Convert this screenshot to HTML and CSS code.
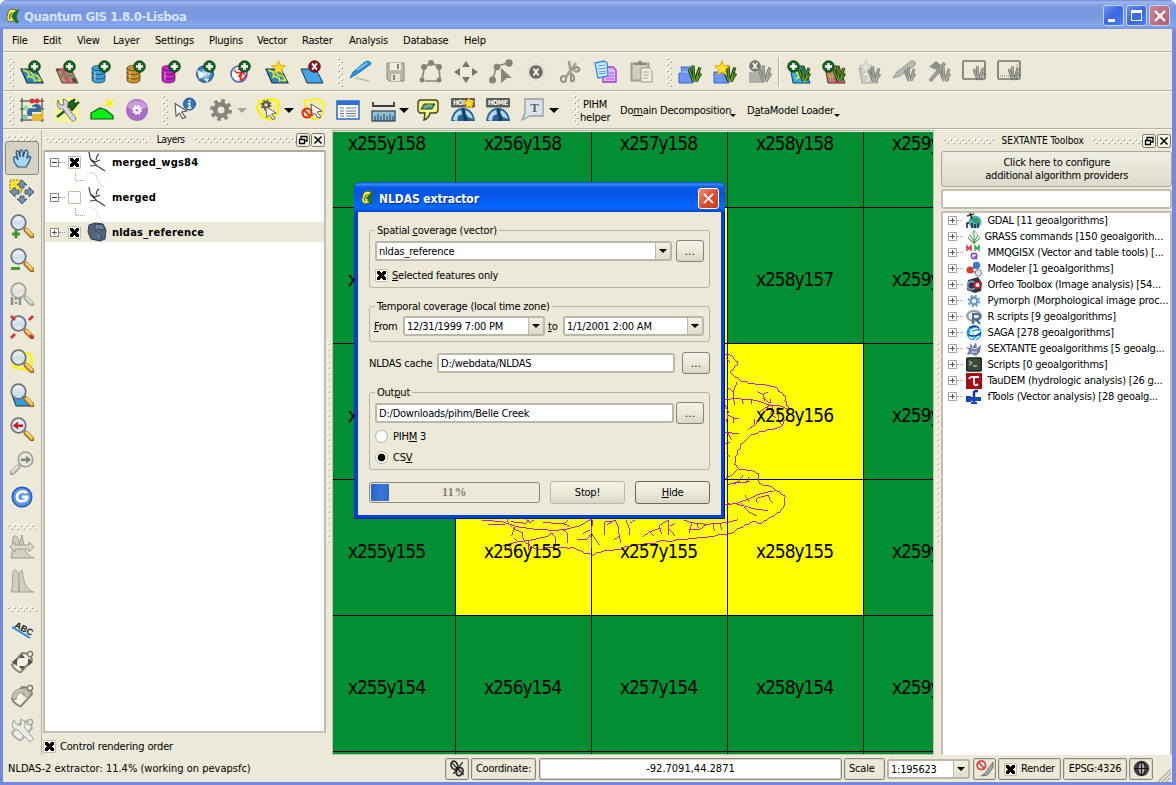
FILE: index.html
```html
<!DOCTYPE html>
<html lang="en">
<head>
<meta charset="utf-8">
<title>Quantum GIS 1.8.0-Lisboa</title>
<link rel="stylesheet" href="styles.css">
</head>
<body>
<svg class="defs" aria-hidden="true">
  <defs>
    <linearGradient id="gold" x1="0" y1="1" x2="1" y2="0"><stop offset="0" stop-color="#b86b10"/><stop offset=".5" stop-color="#ffc84a"/><stop offset="1" stop-color="#a8740e"/></linearGradient>
    <linearGradient id="lens" x1="0" y1="0" x2="0" y2="1"><stop offset="0" stop-color="#f4f8fd"/><stop offset=".55" stop-color="#c9dcf0"/><stop offset="1" stop-color="#e8f2fa"/></linearGradient>
    <radialGradient id="globe"><stop offset="0" stop-color="#dff0ff"/><stop offset=".5" stop-color="#5fa5dc"/><stop offset="1" stop-color="#1b4f8c"/></radialGradient>
  </defs>
  <symbol id="plus" viewBox="0 0 14 14"><circle cx="7" cy="7" r="6.2" fill="#17641f" stroke="#0e4414"/><path d="M7 3.2v7.6M3.2 7h7.6" stroke="#fff" stroke-width="2.6"/></symbol>
  <symbol id="cross" viewBox="0 0 14 14"><circle cx="7" cy="7" r="6.2" fill="#8a1420" stroke="#560a12"/><path d="M4.4 3.6l5.2 6.8M9.6 3.6l-5.2 6.8" stroke="#fff" stroke-width="1.9"/></symbol>
  <symbol id="star" viewBox="0 0 16 16"><path d="M8 .8l2 5 5.4.3-4.2 3.5 1.5 5.4L8 12l-4.700 3 1.500-5.400L.6 6.100 6 5.800z" fill="#ffe428" stroke="#f0a000"/></symbol>
  <symbol id="grass" viewBox="0 0 14 18"><path d="M6 17C3 12 2 8 1 4M7 17C5 10 5 6 5 1M8 17C9 11 10 7 12 3M8 17c2-4 3-6 5-8" fill="none" stroke="#183808" stroke-width="3.200"/><path d="M6 17C3 12 2 8 1 4M7 17C5 10 5 6 5 1M8 17C9 11 10 7 12 3M8 17c2-4 3-6 5-8" fill="none" stroke="#5f9c22" stroke-width="1.400"/></symbol>
  <symbol id="sheet" viewBox="0 0 24 24"><path d="M1 9h15l7 14H7z" fill="#2e86c0" stroke="#14394e" stroke-width="1.200"/></symbol>
  <symbol id="vector" viewBox="0 0 24 24"><use href="#sheet"/><path d="M3 10l5 2 1 4 5 2 1 4M10 11l3 4 5 1 3 5M9 16l-2 2M16 20l5 1" fill="none" stroke="#d8e838" stroke-width="1.700"/></symbol>
  <symbol id="raster" viewBox="0 0 24 24"><path d="M1 9h15l7 14H7z" fill="#b89068" stroke="#5c3a30"/><path d="M5 9h4l7 14h-4z" fill="#c8506e"/><path d="M3.500 14h15l1 3H5z" fill="#85806a"/><path d="M1 9h3l1 2H2zM12 9h4l2 4h-4zM16 18h4l2 4h-4z" fill="#565048"/></symbol>
  <symbol id="db" viewBox="0 0 24 24"><path d="M2 8v12c0 4 13 4 13 0V8z" fill="currentColor"/><ellipse cx="8.500" cy="8" rx="6.500" ry="2.700" fill="currentColor" stroke="#0006"/><path d="M2 12c0 3.500 13 3.500 13 0M2 16.500c0 3.500 13 3.500 13 0M2 8v12c0 4 13 4 13 0V8" fill="none" stroke="#0007"/><path d="M5 12v8" stroke="#fff6" stroke-width="1.500"/></symbol>
  <symbol id="cursor" viewBox="0 0 14 16"><path d="M1 1l11 7-5 1 4 5-3 1-3-5-3 3z" fill="#fff" stroke="#555"/></symbol>
  <symbol id="gear" viewBox="0 0 24 24"><circle cx="12" cy="12" r="9.200" fill="none" stroke="currentColor" stroke-width="3.500" stroke-dasharray="3.600 3.620"/><circle cx="12" cy="12" r="5.800" fill="none" stroke="currentColor" stroke-width="4.600"/></symbol>
  <symbol id="mag" viewBox="0 0 24 24"><path d="M14.500 14.500l2 2" stroke="#555" stroke-width="2.500"/><path d="M16 16l6 6" stroke="#875413" stroke-width="4.800" stroke-linecap="round"/><path d="M16.200 15.800l5.500 5.500" stroke="#f2b040" stroke-width="3.400" stroke-linecap="round"/><path d="M16.500 15l5 5" stroke="#ffe49a" stroke-width="1.200"/><circle cx="8.500" cy="8.500" r="7.300" fill="url(#lens)" fill-opacity=".9" stroke="#6d7278" stroke-width="1.700"/></symbol>
  <symbol id="home" viewBox="0 0 24 24"><path d="M0 23c1-9 6-13 12-13s11 4 12 13z" fill="#276396"/><path d="M2 22c1-6 4-9 8-10l1 4-4 2-1 5zM15 12c4 2 6 5 7 9l-5-2-3-4z" fill="#b8daf0"/><path d="M11 10h2l4 13h-4l-1-7z" fill="#123e68"/><rect x="0" y="0" width="24" height="9.500" rx="1" fill="#5b5f58"/><text x="2" y="7.300" textLength="20" class="plate">HOME</text></symbol>
  <symbol id="tag" viewBox="0 0 24 24"><path d="M12 3l8 1 2 6-11 12c-2 1-8-4-9-7z" fill="#f3f1e8" stroke="#888577" stroke-width="2"/><circle cx="20" cy="4" r="2.600" fill="#ece9d8" stroke="#777468" stroke-width="1.300"/></symbol>
  <symbol id="qgis" viewBox="0 0 16 16"><path d="M3 5c0-3 4-5 8-3 1 3 0 7-1 9-1 3-5 3-7 2-2-2-1-5 0-8z" fill="#f0ee62" stroke="#5b6410"/><path d="M7.500 4.500C5 6 4 9 5 11.500" stroke="#6f7616" stroke-width="1.300" fill="none"/><path d="M15 1c-5 1-7 4-9 8l2 .500-1 2 2 0 2 4 3-1-2.500-4.500c0-3 1.500-6 3.500-9z" fill="#1a7022"/></symbol>
  <symbol id="float" viewBox="0 0 14 14"><rect x=".5" y=".5" width="13" height="13" rx="2" fill="#f4f2e6" stroke="#77756a"/><path d="M5 6V3.500h6V8H8.500M3.500 6.500h5V10.500H3.500z" fill="none" stroke="#000" stroke-width="1.300"/></symbol>
  <symbol id="shut" viewBox="0 0 14 14"><rect x=".5" y=".5" width="13" height="13" rx="2" fill="#f4f2e6" stroke="#77756a"/><path d="M3.500 3.500l7 7M10.500 3.500l-7 7" stroke="#000" stroke-width="1.500"/></symbol>
  <symbol id="branch" viewBox="0 0 20 20"><path d="M2 0c1 6 1 8 4 10s2 4 6 5l6 4M12 2c-3 2-2 3-3 6M3 7l5 3 5-2M3 14l7-1" fill="none" stroke="#3a403b" stroke-width="1.200"/></symbol>
</svg>

<div class="window">
  <header class="titlebar">
    <svg class="logo"><use href="#qgis"/></svg>
    <span class="caption">Quantum GIS 1.8.0-Lisboa</span>
    <span class="wbtn blue"><i class="min"></i></span>
    <span class="wbtn blue"><i class="max"></i></span>
    <span class="wbtn red"><svg viewBox="0 0 12 12"><path d="M1 1l10 10M11 1L1 11" stroke="#fff" stroke-width="2.200"/></svg></span>
  </header>

  <nav class="menubar"><span>File</span><span>Edit</span><span>View</span><span>Layer</span><span>Settings</span><span>Plugins</span><span>Vector</span><span>Raster</span><span>Analysis</span><span>Database</span><span>Help</span></nav>

  <div class="toolbar">
    <i class="grip"></i>
    <svg class="ic" viewBox="0 0 24 24"><use href="#vector"/><use href="#plus" x="8" width="13" height="13"/></svg>
    <svg class="ic" viewBox="0 0 24 24"><use href="#raster"/><use href="#plus" x="8" width="13" height="13"/></svg>
    <svg class="ic c-blue" viewBox="0 0 24 24"><use href="#db"/><use href="#plus" x="8" width="13" height="13"/></svg>
    <svg class="ic c-ochre" viewBox="0 0 24 24"><use href="#db"/><use href="#plus" x="8" width="13" height="13"/></svg>
    <svg class="ic c-pink" viewBox="0 0 24 24"><use href="#db"/><use href="#plus" x="8" width="13" height="13"/></svg>
    <svg class="ic" viewBox="0 0 24 24"><circle cx="10" cy="14" r="9" fill="url(#globe)"/><path d="M2 10c3 0 4 3 7 3l-1 4-4 2zM12 6l5 4-3 5-3-3zM9 18l5 1-2 4z" fill="#fff" opacity=".85"/><use href="#plus" x="8" width="13" height="13"/></svg>
    <svg class="ic" viewBox="0 0 24 24"><circle cx="9" cy="14" r="8" fill="#fff" stroke="#4a68b8" stroke-width="1.600"/><path d="M4 10l3 3 5-1-3 4 3 4 4-4-4-4-2 9M12 8l-4 2" fill="none" stroke="#e02828" stroke-width="1.500"/><use href="#plus" x="8" width="13" height="13"/></svg>
    <svg class="ic" viewBox="0 0 24 24"><use href="#vector"/><use href="#star" x="6" width="15" height="15"/></svg>
    <svg class="ic" viewBox="0 0 24 24"><path d="M1 9h15l7 14H7z" fill="#45a4e6" stroke="#14394e"/><use href="#cross" x="8" width="13" height="13"/></svg>
    <i class="grip g2"></i>
    <svg class="ic" viewBox="0 0 24 24"><path d="M6 18l14 3" stroke="#bdb9a8" stroke-width="1.500"/><path d="M1 18l3-6L16 2c4-2 6 0 6 2L8 14z" fill="#2893e0" stroke="#1166a8" stroke-width=".8"/><path d="M8 10L18 3" stroke="#9bd2fa" stroke-width="1.500"/></svg>
    <svg class="ic" viewBox="0 0 24 24"><path d="M3 3h17v18H5l-2-2z" fill="#bab8ab" stroke="#8d8a7c"/><path d="M6 3h11v7H6z" fill="#f1efe4"/><path d="M7 14h9v7H7z" fill="#e6e3d5"/><path d="M9 15h2v5H9zM13 4h2v5h-2z" fill="#858275"/></svg>
    <svg class="ic" viewBox="0 0 24 24"><path d="M6 7l6-4 7 3M5 9L3 20M20 8l1 12M6 21h12" stroke="#8a887e" stroke-width="1.700" fill="none"/><g fill="#85837a"><circle cx="12" cy="3" r="3"/><circle cx="5" cy="7" r="3"/><circle cx="20" cy="7" r="3"/><circle cx="3" cy="20" r="2.500"/><circle cx="20" cy="20" r="2.500"/></g></svg>
    <svg class="ic" viewBox="0 0 24 24"><path d="M12 1l4 6H8zM12 23l4-6H8zM0 12l6-4v8zM24 12l-6-4v8z" fill="#77756c"/></svg>
    <svg class="ic" viewBox="0 0 24 24"><path d="M3 21L8 6l11-3" stroke="#85837a" fill="none" stroke-width="1.500"/><g fill="#85837a"><circle cx="20" cy="3" r="3.700"/><circle cx="8" cy="7" r="3.300"/><circle cx="3.500" cy="20" r="3.500"/><path d="M12 8l11 10-5 0-6 5z"/></g></svg>
    <svg class="ic" viewBox="0 0 24 24"><circle cx="12" cy="12" r="9.500" fill="#e5e2d3"/><circle cx="12" cy="12" r="6.800" fill="#6e6c64"/><path d="M9.500 8.500l5 7M14.500 8.500l-5 7" stroke="#fff" stroke-width="1.800"/></svg>
    <svg class="ic" viewBox="0 0 24 24"><path d="M10 1l2 12M17 3L7 17" stroke="#a5a296" stroke-width="2.800"/><ellipse cx="4.500" cy="19" rx="2.500" ry="3" fill="none" stroke="#96938a" stroke-width="2.200"/><path d="M12 13v8c4 1 4-4 1-7M13 10l5-3c5 2 1 6-3 4" fill="none" stroke="#96938a" stroke-width="2.200"/></svg>
    <svg class="ic" viewBox="0 0 24 24"><path d="M9 7h10l3 3v12H9z" fill="#e3b8fa" stroke="#9836d8" stroke-width="1.300"/><path d="M1 3l9-2 3 2 1 13-10 2z" fill="#d8ecff" stroke="#2a8aef" stroke-width="1.300"/><path d="M4 6l7-1M4 9l8-1M5 12l7-1M5 14l7-1" stroke="#4b98ee"/><path d="M15 13h5M15 16h5M12 19h8" stroke="#a85bd8"/></svg>
    <svg class="ic" viewBox="0 0 24 24"><path d="M2 3h18v18H2z" fill="#b5b2a2" stroke="#95927f"/><path d="M5 5h12V3h-3l-3-3-3 3H5z" fill="#8d8a7c"/><path d="M4 5h14v14H4z" fill="#d0cdbd"/><path d="M12 8h8l3 3v11H12z" fill="#f2f0e4" stroke="#9f9c8c"/><path d="M14 12h6M14 15h6M14 18h5" stroke="#a5a296"/></svg>
    <i class="grip g2"></i>
    <svg class="ic" viewBox="0 0 24 24"><path d="M3 7h12v16H1V13h3z" fill="#6d95f8" stroke="#4264c0"/><path d="M1 12h14" stroke="#aec4ff"/><use href="#grass" x="10" y="4" width="14" height="19"/></svg>
    <svg class="ic" viewBox="0 0 24 24"><path d="M1 12h15v11H1z" fill="#6d95f8" stroke="#4264c0"/><use href="#grass" x="10" y="4" width="14" height="19"/><use href="#star" x="1" width="16" height="16"/></svg>
    <svg class="ic gray" viewBox="0 0 24 24"><path d="M1 12h15v11H1z" fill="#8a8a8a"/><use href="#grass" x="10" y="4" width="14" height="19"/><use href="#cross" x="1" width="12" height="12"/></svg>
    <i class="sep"></i>
    <svg class="ic" viewBox="0 0 24 24"><path d="M3 6h14l6 17H6z" fill="#30b0e8" stroke="#104068"/><path d="M7 9l4 5 5 3 2 5M9 19l5-4" stroke="#e8e830" stroke-width="2" fill="none"/><use href="#grass" x="11" y="4" width="13" height="19"/><use href="#plus" width="13" height="13"/></svg>
    <svg class="ic" viewBox="0 0 24 24"><path d="M3 6h14l6 17H6z" fill="#c87880" stroke="#483020"/><path d="M5 14h12l2 4H6z" fill="#b8a050"/><path d="M12 18h5l2 5h-5z" fill="#c43468"/><use href="#grass" x="11" y="4" width="13" height="19"/><use href="#plus" width="13" height="13"/></svg>
    <svg class="ic gray" viewBox="0 0 24 24"><path d="M2 8h14l5 15H5z" fill="#bbb" stroke="#777"/><use href="#star" x="2" width="14" height="14"/><path d="M7 15c4-4 8 4 3 6" stroke="#eee" stroke-width="2" fill="none"/><use href="#grass" x="11" y="5" width="13" height="18"/></svg>
    <svg class="ic gray" viewBox="0 0 24 24"><path d="M1 18l4-6L19 1c4-1 5 2 4 4L8 16z" fill="#999" stroke="#666"/><use href="#grass" x="12" y="5" width="12" height="18"/></svg>
    <svg class="ic gray" viewBox="0 0 24 24"><path d="M3 21L18 3M7 4l14 17" stroke="#666" stroke-width="4"/><path d="M2 7l7-6 5 4-4 5z" fill="#555"/><use href="#grass" x="12" y="5" width="12" height="18"/></svg>
    <svg class="ic" viewBox="0 0 24 24"><rect x="1" y="1" width="22" height="18" rx="1" fill="none" stroke="#76746c" stroke-width="1.600"/><use class="gray" href="#grass" x="11" y="3" width="12" height="20"/></svg>
    <svg class="ic" viewBox="0 0 24 24"><rect x="1" y="1" width="22" height="18" rx="1" fill="none" stroke="#76746c" stroke-width="1.600"/><path d="M3 16h17V4" fill="none" stroke="#77756c" stroke-dasharray="1 1"/><use class="gray" href="#grass" x="11" y="3" width="12" height="20"/></svg>
  </div>

  <div class="toolbar second">
    <i class="grip"></i>
    <svg class="ic" viewBox="0 0 24 24"><path d="M2 0v24M22 0v24M0 3h24M0 11h24M0 22h24" stroke="#65645d" stroke-width="1.400"/><circle cx="12" cy="3" r="2.500" fill="#e03030"/><circle cx="17" cy="3" r="2.500" fill="#e03030"/><circle cx="6" cy="10" r="2.500" fill="#8be0a0"/><circle cx="5" cy="19" r="2.500" fill="#7bc8b0"/><path d="M12 9c0-4 9-4 9 0v5h-9v4H8c-2-3-1-7 2-7h6V9z" fill="#356c9f"/><path d="M21 11c4 3 3 12-1 12h-8v-7h9z" fill="#e8b830"/></svg>
    <svg class="ic" viewBox="0 0 24 24"><rect width="24" height="24" rx="3" fill="#faf49a"/><path d="M2 19l9-7M13 9l7-8M16 10l8-6" stroke="#176018" stroke-width="2.500"/><path d="M12 6l5-4 5 5-5 6z" fill="#1d641c" stroke="#0a2d0a"/><path d="M3 2l2 5h4L8 1c5 1 6 5 4 8l9 11c0 3-3 4-5 2L8 11C3 12 1 7 3 2z" fill="#d6dae0" stroke="#707780"/></svg>
    <svg class="ic" viewBox="0 0 24 24"><path d="M1 21v-6l9-5 6 2 7 6v3z" fill="#08f218" stroke="#075c0c" stroke-width="1.200"/><circle cx="19" cy="5" r="2.700" fill="#fff200"/><path d="M19 0v10M14 2l10 6M14 8l10-6" stroke="#fff200"/></svg>
    <svg class="ic" viewBox="0 0 24 24"><circle cx="12" cy="12" r="11" fill="#a870c4"/><path d="M2 9a11 11 0 0 1 20 0c-6 4-14 4-20 0z" fill="#c79edb"/><use class="white" href="#gear" x="6.500" y="6.500" width="11" height="11"/></svg>
    <i class="grip g3"></i>
    <svg class="ic" viewBox="0 0 24 24"><use href="#cursor" x="0" y="4" width="15" height="18"/><circle cx="15.500" cy="6" r="6" fill="#3478bd" stroke="#1c5595"/><path d="M15.500 2v2M14 5.500h1.500V10M13.500 10h4" stroke="#fff" stroke-width="1.700" fill="none"/></svg>
    <svg class="ic c-gray" viewBox="0 0 24 24"><use href="#gear"/></svg><i class="drop dim"></i>
    <svg class="ic" viewBox="0 0 24 24"><path d="M3 3l13-2 7 3-1 11-6 7-10-3-5-8z" fill="#f1ec9e" stroke="#f8f400" stroke-width="2"/><use class="c-dark" href="#gear" x="4" y="1" width="12" height="12"/><use href="#cursor" x="9" y="7" width="13" height="16"/></svg><i class="drop"></i>
    <svg class="ic" viewBox="0 0 24 24"><path d="M3 3l13-2 7 3-1 11-6 7-10-3-2-9z" fill="#f1ecae" stroke="#f8f400" stroke-width="1.500"/><use href="#cursor" x="9" y="4" width="14" height="18"/><circle cx="6" cy="15" r="4.500" fill="none" stroke="#dd3024" stroke-width="2.200"/><path d="M3 12l6 6" stroke="#dd3024" stroke-width="2"/></svg>
    <svg class="ic" viewBox="0 0 24 24"><rect x="1" y="3" width="22" height="18" fill="#fff" stroke="#2b66cd" stroke-width="1.500"/><rect x="1" y="3" width="22" height="4" fill="#2b6ddc"/><path d="M4 10h4M4 13h4M4 15.500h4M4 18h4M10 10h10M10 13h10M10 15.500h10M10 18h10" stroke="#667795" stroke-width="1.200"/></svg>
    <svg class="ic" viewBox="0 0 24 24"><path d="M2 4v4h21V4" fill="none" stroke="#3c3d3e" stroke-width="1.800"/><rect x="1" y="13" width="23" height="10" fill="#8bc1e0" stroke="#334c5c" stroke-width="1.300"/><path d="M4 23v-5M7 23v-7M10 23v-5M13 23v-7M16 23v-5M19 23v-7M22 23v-5" stroke="#263b48"/></svg><i class="drop"></i>
    <svg class="ic" viewBox="0 0 24 24"><path d="M5 2h14c2 0 3 1 3 3v6c0 2-1 4-3 4h-5c-1 4-3 6-6 7l1-7H5c-2 0-3-2-3-4V5c0-2 1-3 3-3z" fill="#f8f486" stroke="#42411c" stroke-width="1.400"/><path d="M8 6h11l-3 5H5z" fill="#4495ba" stroke="#24482c"/><path d="M8 10l5-3 3 1" stroke="#9cbb3c" stroke-width="1.700" fill="none"/></svg>
    <svg class="ic" viewBox="0 0 24 24"><use href="#home"/><use href="#star" x="12" y="-1" width="12" height="12"/></svg>
    <svg class="ic" viewBox="0 0 24 24"><use href="#home"/></svg>
    <svg class="ic" viewBox="0 0 24 24"><path d="M4 1h18v17H9l-8 4 3-7z" fill="#d9e3e9" stroke="#969da1" stroke-width="1.300"/><text x="13.500" y="14" text-anchor="middle" class="tee">T</text></svg><i class="drop"></i>
    <i class="grip g4"></i>
    <span class="txt two">PIHM<br>helper</span>
    <span class="txt domain">Do<u>m</u>ain Decomposition</span><i class="drop tiny"></i>
    <span class="txt loader">D<u>a</u>taModel Loader</span><i class="drop tiny"></i>
  </div>

  <div class="main">
    <aside class="sidebar">
      <i class="hgrip"></i>
      <span class="cell on"><svg viewBox="0 0 24 24"><path d="M8 21C5 18 3 14 4 11c2-1 3 1 4 3L6 6c1-2 3-1 3 1l1 4V5c1-2 3-1 3 1v5l2-6c1-2 3 0 3 2l-1 5 2-2c2 0 2 2 1 3-1 4-3 6-4 8z" fill="#a8d8f6" stroke="#2a506a" stroke-width="1.200"/></svg></span>
      <span class="cell"><svg viewBox="0 0 24 24"><path d="M0 0h12v12H0z" fill="#ffe232" stroke="#8b7b18" stroke-dasharray="2 1"/><path d="M12 0l5 5h-3v3h-4V5H7zM12 24l5-5h-3v-3h-4v3H7zM0 12l5-5v3h4v4H5v3zM24 12l-5-5v3h-4v4h4v3z" fill="#7493ac" stroke="#455d72"/></svg></span>
      <span class="cell"><svg viewBox="0 0 24 24"><use href="#mag"/><path d="M6 16v8M2 20h8" stroke="#3d9932" stroke-width="3"/></svg></span>
      <span class="cell"><svg viewBox="0 0 24 24"><use href="#mag"/><path d="M1 20.500h9" stroke="#3d9932" stroke-width="3"/></svg></span>
      <span class="cell gray"><svg viewBox="0 0 24 24"><use href="#mag"/><path d="M2 15v8M10 15v8M6 16v2M6 20v2" stroke="#555" stroke-width="2.500"/></svg></span>
      <span class="cell"><svg viewBox="0 0 24 24"><use href="#mag"/><path d="M1 1l4 4M23 1l-4 4M1 23l4-4M23 23l-3-3" stroke="#d82a34" stroke-width="2.500"/></svg></span>
      <span class="cell"><svg viewBox="0 0 24 24"><path d="M8 4l11 0 3 5-1 10-6 2-12-3z" fill="#f3ee9c" stroke="#fbf500" stroke-width="2"/><use href="#mag"/></svg></span>
      <span class="cell"><svg viewBox="0 0 24 24"><path d="M2 12h12l10 11H6z" fill="#339dd4" stroke="#12364a"/><use href="#mag"/></svg></span>
      <span class="cell"><svg viewBox="0 0 24 24"><use href="#mag"/><path d="M3 8.500l5-4v3h5v2.500H8v2.800z" fill="#d31825"/></svg></span>
      <span class="cell gray"><svg viewBox="0 0 24 24"><g transform="matrix(-1 0 0 1 24 0)"><use href="#mag"/></g><path d="M21 8.500l-5-4v3h-5v2.500h5v2.800z" fill="#444"/></svg></span>
      <span class="cell"><svg viewBox="0 0 24 24"><circle cx="12" cy="12" r="9.800" fill="#5b96eb" stroke="#2058bd" stroke-width="1.500"/><path d="M17 8c-4-3-10-1-10 4 0 6 9 5 10 1v-1h-5" fill="none" stroke="#fff" stroke-width="2.800"/></svg></span>
      <i class="hgrip mid"></i>
      <span class="cell faded"><svg viewBox="0 0 24 24"><path d="M1 23C4 15 1 5 4 1c5 0 5 4 5 11L12 0c2 14 5 22 12 23z" fill="#c9c7b9" stroke="#858378"/><path d="M0 12l5-5v3h14V7l5 5-5 5v-3H5v3z" fill="#d7d5c7" stroke="#858378"/></svg></span>
      <span class="cell faded"><svg viewBox="0 0 24 24"><path d="M1 23C4 15 1 5 4 1c5 0 5 4 5 22zM9 23C9 12 8 3 12 1c2 14 5 21 12 22z" fill="#c9c7b9" stroke="#8d8b80"/></svg></span>
      <i class="hgrip mid low"></i>
      <span class="cell"><svg viewBox="0 0 24 24"><text x="4" y="10" transform="rotate(27 4 10)" class="abc">ABC</text><path d="M2 10l18 11" stroke="#1789f5" stroke-width="2"/></svg></span>
      <span class="cell"><svg viewBox="0 0 24 24"><use href="#tag"/><path d="M12 4l3 4H9zM12 20l3-4H9zM2 12l5-4v8zM23 12l-5-4v8z" fill="#55534c"/></svg></span>
      <span class="cell"><svg viewBox="0 0 24 24"><use href="#tag"/><path d="M2 14C2 5 14 1 19 8l3 0-4 6-6-4h3c-3-3-9-1-9 6z" fill="#c4c1b2" stroke="#969384"/></svg></span>
      <span class="cell gray"><svg viewBox="0 0 24 24"><use href="#tag"/><path d="M4 2l3 5h4V1c5 2 5 6 3 8l9 11c0 4-4 4-6 1L8 12C2 12 1 7 4 2z" fill="#eee" stroke="#666"/></svg></span>
    </aside>

    <section class="dock layers">
      <div class="dockhead"><i class="hgrip wide"></i><span class="lt">Layers</span><i class="hgrip wide"></i><svg class="db"><use href="#float"/></svg><svg class="db"><use href="#shut"/></svg></div>
      <div class="tree">
        <div class="layer"><i class="exp"></i><i class="dots"></i><i class="check x"></i><svg class="lic"><use href="#branch"/></svg><span>merged_wgs84</span></div>
        <div class="sub"><svg viewBox="0 0 40 16"><path d="M.500 1v7.500h9" stroke="#9c9a90" stroke-dasharray="1 1" fill="none"/><path d="M14 1c8-1 7 4 9 8s5 4 5 7" fill="none" stroke="#f0b4f4"/></svg></div>
        <div class="layer"><i class="exp"></i><i class="dots"></i><i class="check"></i><svg class="lic"><use href="#branch"/></svg><span>merged</span></div>
        <div class="sub"><svg viewBox="0 0 40 16"><path d="M.500 1v7.500h9" stroke="#9c9a90" stroke-dasharray="1 1" fill="none"/><path d="M14 1c8-1 7 4 9 8s5 4 5 7" fill="none" stroke="#f2e0d6"/></svg></div>
        <div class="layer picked"><i class="exp more-in"></i><i class="dots"></i><i class="check x"></i><svg class="lic" viewBox="0 0 20 20"><path d="M2 3l6-2 8 1 3 6-1 9-5 2-9-2-3-7z" fill="#53647e" stroke="#2f3c50"/><path d="M8 2l8 1 2 5-7-1-3 2zM9 9l5 5-1 5" fill="#7084a0" stroke="#34435a"/></svg><span>nldas_reference</span></div>
      </div>
      <div class="order"><i class="check x"></i><span>Control rendering order</span></div>
    </section>

    <div class="splitter"><i class="vgrip"></i></div>

    <div class="map">
      <svg viewBox="333 132 600 622" class="canvas">
        <path d="M333 132h601v622H333z" fill="#028f33"/>
        <path d="M455 207h273v136h136v272H455z" fill="#ff0"/>
        <path d="M455.500 132v622M591.500 132v622M727.500 132v622M863.500 132v622M333 207.500h601M333 343.500h601M333 479.500h601M333 615.500h601M333 751.500h601" stroke="#000" fill="none"/>
        <g class="river" transform="translate(440 340) scale(.3333)">
          <path d="M855 42l13 2 12 6 3 8 10 8-1 8-8 4-4 12-8 4v5l14 12 9 4 8 8 14 1 12 8 12-2 10 4h24l6 3 18 2 12 4 5 12 8 2 8 10 5 3-2 12 6 4-2 9 8 6-3 12 1 12-6 12-8 8-4 12-9 5-12 3-5 3-20 2-9 4-14 1-5 5-18 4-12 9-10 14-10 5-2 14-9 5-1 14-6 8 3 10-6 10 5 2 10 12 16 2 12 3 13-1 9 8 9 2-2 14 4 14 14 8 14 1 12 4 7 10 14 3 5 8 12 5-3 14v16l-6 8-8 10-8 2-8 10-14 4-10 10-6 0-8 9-12-2-6-4-12 1-8 6-10 2-10 9-12 2-10 8-8 6-12 3-12 2-14-1-12 5-20 2-9 4-22-1-16 4-14-1-12 4-22-1-10 4-22 1-10-4-14 4-10 6-32 1-10 4-18-1-10 4-20 2-10 9-16-1-16 5-20-1-14 6-9 0-12 8-12-6-14 0-6-6-10-2-18-9-16 2-14-4-20 4-20-3-12-1-10 7-16 2-12-8-8-4-6-8-8 0-6-12-4-8 2-11-12-6-12-4-8-9-8-6-8-12 2-6-5-7-6-3"/>
          <path d="M860 140l20 15 3 40M892 125l-12 30M855 178l35-2 60 5 40 15 30 2 22 8M905 178l5 15M935 180l-2 13M950 153l20 12 5 17M965 165l18-8M970 175l20 15 2-12M960 215l30-20M925 268l22-15 15-25 30-35M945 252l0-15M1000 195l-8 28 15 10M1015 200l0 45 10 10M870 68l-12-15M855 195l10 20-5 30M862 225l22 10 14 0M882 235l-2 15M855 278l43 2M865 280l10 20M855 312l15-5M860 345l10 4M855 415l20-10 18-17M860 435l35-10 15-20M880 430l50-5M920 430l8-20M855 495l35-5 35-12 30-15 43-10M860 488l12 5M915 465l12 20M950 475l35-10 5 15 10 10M948 478l5 12M905 490l20 25 25 13M890 492l55 15 40 5"/>
          <path d="M125 540l60 5 45 15 55 8 55 3 35-2 45-12 35-20M145 555l50 0M212 545l45 5 10-10M225 562l-10 25M258 538l10 10 15-8M310 548l60 3 20 8M385 540l-15 12M370 570l12 10 0 30M330 575l15 15 3 25M340 578l-20 12-55 12-40 5-35 10M265 600l0 30M232 605l-10-12M205 615l12 15M410 600l30 0 15-20 2-40M430 580l20-10M455 580l12 20 12 15M455 590l0 35M495 585l0-40 25 0M500 555l25-15M525 540l10 20 3 30 5 20M537 590l-15 10M558 540l10 25 0 20M585 540l-15 10M610 590l20-15 30-10 0-10 25-15M632 577l8 10M660 565l5 18M685 540l0 45M685 565l20 22M705 550l-15 8M733 540l20 8 45 5 60-5 35-8M755 550l-8 28M770 548l5 15M800 553l-20 15-30 0M820 552l3 20M840 550l5 20"/>
        </g>
        <g class="labels">
          <text x="348" y="150" textLength="78">x255y158</text><text x="484" y="150" textLength="78">x256y158</text><text x="620" y="150" textLength="78">x257y158</text><text x="756" y="150" textLength="78">x258y158</text><text x="892" y="150" textLength="78">x259y158</text>
          <text x="348" y="286" textLength="78">x255y157</text><text x="756" y="286" textLength="78">x258y157</text><text x="892" y="286" textLength="78">x259y157</text>
          <text x="348" y="422" textLength="78">x255y156</text><text x="756" y="422" textLength="78">x258y156</text><text x="892" y="422" textLength="78">x259y156</text>
          <text x="348" y="558" textLength="78">x255y155</text><text x="484" y="558" textLength="78">x256y155</text><text x="620" y="558" textLength="78">x257y155</text><text x="756" y="558" textLength="78">x258y155</text><text x="892" y="558" textLength="78">x259y155</text>
          <text x="348" y="694" textLength="78">x255y154</text><text x="484" y="694" textLength="78">x256y154</text><text x="620" y="694" textLength="78">x257y154</text><text x="756" y="694" textLength="78">x258y154</text><text x="892" y="694" textLength="78">x259y154</text>
        </g>
      </svg>
    </div>

    <div class="splitter right"><i class="vgrip"></i></div>

    <section class="dock toolbox">
      <div class="dockhead"><i class="hgrip wide"></i><span class="st">SEXTANTE Toolbox</span><i class="hgrip wide"></i><svg class="db"><use href="#float"/></svg><svg class="db"><use href="#shut"/></svg></div>
      <div class="config">Click here to configure<br>additional algorithm providers</div>
      <div class="search"></div>
      <div class="algos">
        <div class="alg"><i class="exp more-in"></i><i class="dots"></i><svg viewBox="0 0 16 16"><circle cx="9" cy="9" r="6.500" fill="#4ab0c0"/><path d="M4 5l8 0 2 4-4 1-3-2z" fill="#3f9a4a"/><path d="M1 3l7-2M4 0l2 6" stroke="#333" stroke-width="1.500"/><path d="M1 15v-5h2M6 15v-5M9 15v-4M12 15v-5" stroke="#222" stroke-width="1.500" fill="none"/></svg><span>GDAL [11 geoalgorithms]</span></div>
        <div class="alg near"><i class="exp more-in"></i><i class="dots"></i><svg viewBox="0 0 16 16"><path d="M8 1l6 8-6 6-6-6z" fill="#f8f8f8" stroke="#c0c0b8"/><path d="M8 15V2M8 13L4 6M8 13l4-7M8 14L2 9M8 14l6-5" stroke="#46a046" fill="none"/></svg><span>GRASS commands [150 geoalgorith...</span></div>
        <div class="alg"><i class="exp more-in"></i><i class="dots"></i><svg viewBox="0 0 16 16"><path d="M1 6V1l2 3 2-3v5" fill="none" stroke="#d83040" stroke-width="1.400"/><path d="M9 6V1l2 3 2-3v5" fill="none" stroke="#2d9c50" stroke-width="1.400"/><circle cx="8" cy="11" r="2.700" fill="none" stroke="#7440d0" stroke-width="1.500"/><path d="M8 11l3 3" stroke="#7440d0" stroke-width="1.500"/></svg><span>MMQGISX (Vector and table tools) [...</span></div>
        <div class="alg"><i class="exp more-in"></i><i class="dots"></i><svg viewBox="0 0 16 16"><path d="M4 9l7-5M5 10l8 2" stroke="#888" stroke-width="2"/><circle cx="4" cy="9" r="3.500" fill="#d43a30"/><circle cx="10.500" cy="4.500" r="3.700" fill="#3b78c4"/><circle cx="12.500" cy="12" r="3.300" fill="#e0e4e8" stroke="#888"/></svg><span>Modeler [1 geoalgorithms]</span></div>
        <div class="alg"><i class="exp more-in"></i><i class="dots"></i><svg viewBox="0 0 16 16"><path d="M2 3l10-3 4 6-1 8-6 2-8-3z" fill="#26384c"/><circle cx="5.500" cy="8.500" r="4" fill="none" stroke="#7f98b0" stroke-width="2"/><circle cx="11.500" cy="8" r="3" fill="#fff" stroke="#c32025" stroke-width="2"/></svg><span>Orfeo Toolbox (Image analysis) [54...</span></div>
        <div class="alg"><i class="exp more-in"></i><i class="dots"></i><svg class="c-steel" viewBox="0 0 16 16"><use href="#gear" x="1" y="1" width="14" height="14"/></svg><span>Pymorph (Morphological image proc...</span></div>
        <div class="alg"><i class="exp more-in"></i><i class="dots"></i><svg viewBox="0 0 16 16"><ellipse cx="8" cy="7" rx="6.800" ry="5" fill="none" stroke="#9da2aa" stroke-width="2.500"/><path d="M7 15V5h4c4 0 4 5 0 5H7m3 0l4 5" fill="none" stroke="#4a6d9c" stroke-width="2.200"/></svg><span>R scripts [9 geoalgorithms]</span></div>
        <div class="alg"><i class="exp more-in"></i><i class="dots"></i><svg viewBox="0 0 16 16"><circle cx="8" cy="8" r="7.500" fill="#19a2f0"/><path d="M14 2L5 5v3l7-2-5 4-5-1M14 6L6 13l-3-1M13 11l-5 4" fill="none" stroke="#fff" stroke-width="1.500"/><path d="M3 3c3-2 7-3 10 0M2 9c3 3 7 3 13-1" stroke="#1237a5" fill="none" stroke-width="1.400"/></svg><span>SAGA [278 geoalgorithms]</span></div>
        <div class="alg"><i class="exp more-in"></i><i class="dots"></i><svg viewBox="0 0 16 16"><path d="M4 2l3 4 3-5 1 6 4-3-1 7-4 4-5-2-4 1 2-5-3-3 4 1z" fill="#6f7fa6"/><path d="M5 7l5 1 2-2M5 11l6 0" stroke="#e4e8f2" fill="none"/></svg><span>SEXTANTE geoalgorithms [5 geoalg...</span></div>
        <div class="alg"><i class="exp more-in"></i><i class="dots"></i><svg viewBox="0 0 16 16"><rect x=".7" y="1" width="14.600" height="13" rx="1" fill="#3c4a3c" stroke="#1b211b" stroke-width="1.400"/><path d="M3 4l3 2-3 2M7 9h4" stroke="#e0ecdf" fill="none"/></svg><span>Scripts [0 geoalgorithms]</span></div>
        <div class="alg"><i class="exp more-in"></i><i class="dots"></i><svg viewBox="0 0 16 16"><path d="M0 0h16v16H0z" fill="#a01016"/><path d="M3 6c1-3 3-2 10-2M8 4v6c0 3 2 3 4 1" stroke="#fff" stroke-width="1.800" fill="none"/></svg><span>TauDEM (hydrologic analysis) [26 g...</span></div>
        <div class="alg"><i class="exp more-in"></i><i class="dots"></i><svg viewBox="0 0 16 16"><path d="M8 14V2M8 2h4" stroke="#12389b" stroke-width="2.500" fill="none"/><path d="M0 7h4l2 1h9v4h-9l-2 1H0zM5 13h6v2H5z" fill="#1848b0"/></svg><span>fTools (Vector analysis) [28 geoalg...</span></div>
      </div>
    </section>
  </div>

  <footer class="status">
    <span class="msg">NLDAS-2 extractor: 11.4% (working on pevapsfc)</span>
    <span class="sb s1"><svg viewBox="0 0 16 16"><ellipse cx="5" cy="5" rx="3" ry="4" fill="#ddd" stroke="#222" stroke-width="1.500" transform="rotate(-20 5 5)"/><ellipse cx="10" cy="11" rx="3" ry="4" fill="#bbb" stroke="#222" stroke-width="1.500" transform="rotate(30 10 11)"/><path d="M2 2l12 12M13 2L4 13" stroke="#222" stroke-width="1.200"/></svg></span>
    <span class="sb s2">Coordinate:</span>
    <span class="sb field s3">-92.7091,44.2871</span>
    <span class="sb s4">Scale</span>
    <span class="combo s5"><span>1:195623</span><i></i></span>
    <span class="sb s6"><svg viewBox="0 0 16 16"><path d="M16 2L9 12l-4 3 6-1 5-7z" fill="#aaa" stroke="#555" stroke-width=".7"/><circle cx="5" cy="5" r="4" fill="#fff8" stroke="#e23030" stroke-width="1.500"/><path d="M2.500 2.500l5 5" stroke="#e23030" stroke-width="1.500"/></svg></span>
    <span class="sb s7"><i class="check x"></i><span>Render</span></span>
    <span class="sb s8">EPSG:4326</span>
    <span class="sb s9"><svg viewBox="0 0 16 16"><circle cx="8" cy="8" r="7.300" fill="#444"/><ellipse cx="8" cy="8" rx="3.500" ry="6" fill="#aaa" stroke="#111"/><path d="M1 8h14M8 1v14" stroke="#151515"/></svg></span>
    <svg class="sizer" viewBox="0 0 14 14"><path d="M14 1L1 14M14 5l-9 9M14 9l-5 5" stroke="#b5b2a0" stroke-width="1.500"/></svg>
  </footer>
</div>

<div class="dialog">
  <header class="dlgbar"><svg class="logo"><use href="#qgis"/></svg><span class="dcap">NLDAS extractor</span><span class="dclose"><svg viewBox="0 0 12 12"><path d="M1 1l10 10M11 1L1 11" stroke="#fff" stroke-width="2"/></svg></span></header>
  <div class="dlgbody">
    <fieldset class="f1"><legend>Spatial <u>c</u>overage (vector)</legend>
      <div class="line"><span class="combo c1"><span>nldas_reference</span><i></i></span><span class="btn more">...</span></div>
      <div class="opt"><i class="check x"></i><span><u>S</u>elected features only</span></div>
    </fieldset>
    <fieldset class="f2"><legend>Temporal coverage (local time zone)</legend>
      <div class="line"><span class="from"><u>F</u>rom</span><span class="combo c2"><span>12/31/1999 7:00 PM</span><i></i></span><span class="to"><u>t</u>o</span><span class="combo c3"><span>1/1/2001 2:00 AM</span><i></i></span></div>
    </fieldset>
    <div class="line cache"><span class="cl">NLDAS cache</span><span class="input ci">D:/webdata/NLDAS</span><span class="btn more">...</span></div>
    <fieldset class="f3"><legend>Out<u>p</u>ut</legend>
      <div class="line"><span class="input oi">D:/Downloads/pihm/Belle Creek</span><span class="btn more">...</span></div>
      <div class="opt r1"><i class="radio"></i><span>PIH<u>M</u> 3</span></div>
      <div class="opt r2"><i class="radio sel"></i><span>CS<u>V</u></span></div>
    </fieldset>
    <div class="foot"><span class="progress"><i></i><b>11%</b></span><span class="btn stop">Stop!</span><span class="btn hide"><u>H</u>ide</span></div>
  </div>
</div>
</body>
</html>
```
FILE: styles.css
```css
* { box-sizing: border-box; }
body {
  margin: 0;
  width: 1176px;
  height: 785px;
  overflow: hidden;
  position: relative;
  background: #fff;
  font-family: "DejaVu Sans Condensed", "DejaVu Sans", sans-serif;
  font-stretch: condensed;
  font-size: 11px;
  letter-spacing: -0.22px;
  line-height: 14px;
  color: #000;
  white-space: nowrap;
}
i { font-style: normal; display: block; flex: none; }
svg { display: block; flex: none; overflow: visible; }
span { flex: none; }
u { text-decoration: underline; text-underline-offset: 1px; }
.defs { position: absolute; width: 0; height: 0; }

.window {
  width: 1176px;
  height: 785px;
  padding: 0 4px 3px 3px;
  background: #7489dd;
  border-radius: 7px 7px 0 0;
  display: flex;
  flex-direction: column;
}
.titlebar {
  height: 29px;
  margin: 0 -4px 0 -3px;
  padding: 2px 6px 0 5px;
  display: flex;
  align-items: center;
  gap: 2px;
  border-radius: 7px 7px 0 0;
  background: linear-gradient(#7488d8, #9eb8ee 2px, #7f9ce2 6px, #7a96df 12px, #7c9ae2 19px, #84a9ed 25px, #7a93dd 29px);
}
.logo { width: 16px; height: 16px; }
.caption {
  flex: 1;
  margin-left: 1px;
  padding-top: 2px;
  font: bold 13px "DejaVu Sans Condensed", "DejaVu Sans", sans-serif;
  letter-spacing: -0.4px;
  color: #d8e4f8;
}
.wbtn {
  width: 21px;
  height: 21px;
  border: 1px solid #c5d3f5;
  border-radius: 3px;
  display: grid;
  place-items: center;
}
.wbtn.blue { background: linear-gradient(135deg, #6f92ee, #3a67e0 50%, #4a82f2); }
.wbtn.red { background: linear-gradient(135deg, #c58a98, #b05c6c); }
.wbtn svg { width: 12px; height: 12px; }
.min { width: 7px; height: 3px; background: #fff; margin: 9px 4px 0 0; }
.max { width: 11px; height: 11px; border: 1px solid #fff; border-top-width: 3px; }

.menubar {
  height: 23px;
  padding: 2px 0 0 9px;
  background: #ece9d8;
  border-bottom: 1px solid #b5b2a2;
  display: grid;
  grid-template-columns: 31px 34px 36px 42px 54px 48px 45px 47px 54px 61px 40px;
  align-items: center;
}
.toolbar {
  height: 39px;
  padding-left: 5px;
  background: #ece9d8;
  border-top: 1px solid #f8f7f0;
  border-bottom: 1px solid #b5b2a2;
  display: flex;
  align-items: center;
}
.toolbar.second { height: 38px; }
.ic { width: 24px; height: 24px; margin: 0 5.500px; }
.grip, .vgrip, .hgrip {
  background:
    radial-gradient(circle at 1px 1px, #fff 1.200px, #fff0 1.300px) 0 0 / 6px 6px,
    radial-gradient(circle at 1px 1px, #fff 1.200px, #fff0 1.300px) 3px 3px / 6px 6px,
    radial-gradient(circle at 2px 2px, #bcb9a8 1px, #fff0 1.300px) 0 0 / 6px 6px,
    radial-gradient(circle at 2px 2px, #bcb9a8 1px, #fff0 1.300px) 3px 3px / 6px 6px;
}
.grip { width: 6px; height: 30px; }
.hgrip { width: 30px; height: 6px; }
.g2 { margin-left: 8px; }
.g3 { margin-left: 8px; }
.g4 { margin-left: 13px; }
.sep { width: 2px; height: 30px; margin: 0 1px; border-left: 1px solid #b5b2a2; background: #fff; }
.drop { width: 0; height: 0; border: 5px solid transparent; border-top-color: #000; border-bottom-width: 0; margin: 0 1px 0 -1px; }
.drop.dim { border-top-color: #a9a697; margin-right: 3px; }
.drop.tiny { border-width: 3px 3px 0; margin: 10px 0 0 -3px; }
.c-blue { color: #3aa0dc; }
.c-ochre { color: #cf9228; }
.c-pink { color: #cc20cc; }
.c-gray { color: #85837b; }
.c-dark { color: #5a584c; }
.c-steel { color: #6c9ccc; }
.white { color: #fff; }
.gray { filter: grayscale(1); opacity: .6; }
.faded { opacity: .75; }
.plate { font: bold 7px "DejaVu Sans Condensed", sans-serif; letter-spacing: 0; fill: #fff; }
.tee { font: bold 13px "Liberation Serif", serif; fill: #5d6366; letter-spacing: 0; }
.abc { font: bold 9px "Liberation Sans", sans-serif; fill: #222; letter-spacing: 0; }
.txt { text-align: center; }
.two { line-height: 13px; width: 30px; margin: 1px 0 0 1px; }
.domain { margin: 2px 0 0 10px; width: 113px; text-align: left; }
.loader { margin: 2px 0 0 11px; width: 90px; text-align: left; }

.main {
  height: 626px;
  background: #ece9d8;
  border-top: 1px solid #f8f7f0;
  display: flex;
}
.sidebar {
  width: 39px;
  padding-left: 1px;
  border-right: 1px solid #b5b2a2;
  display: flex;
  flex-direction: column;
  align-items: center;
}
.sidebar .hgrip { margin-top: 5px; }
.cell { width: 34px; height: 33.900px; display: grid; place-items: center; border-radius: 3px; }
.cell svg { width: 24px; height: 24px; }
.cell.on { border: 1px solid #87847a; background: #d6d3c5; }
.sidebar .mid { margin: 10px 0 0; }
.sidebar .low { margin: 8px 0 0; }

.dock { display: flex; flex-direction: column; }
.layers { width: 285px; padding-left: 1px; }
.dockhead { height: 20px; flex: none; display: flex; align-items: center; font-size: 10px; letter-spacing: -0.02px; }
.dockhead .wide { flex: 1; }
.db { width: 14px; height: 14px; margin-right: 1px; }
.lt { margin: 0 9px; letter-spacing: -0.3px; }
.layers .dockhead { padding-left: 2px; }
.tree {
  height: 583px;
  flex: none;
  border: 2px solid #c2bfae;
  border-top-color: #aeab9c;
  border-radius: 2px;
  background: #fff;
  font-weight: bold;
  letter-spacing: 0.23px;
}
.layer { height: 20px; padding-left: 5px; display: flex; align-items: center; }
.layer span { padding-top: 2px; }
.layer.picked { background: #ece9d8; }
.sub { height: 15px; padding-left: 30px; }
.sub svg { width: 40px; height: 16px; }
.exp {
  width: 9px;
  height: 9px;
  border: 1px solid #8b897f;
  background: linear-gradient(#333, #333) center / 5px 1px no-repeat #fff;
}
.exp.more-in {
  background:
    linear-gradient(#555, #555) center / 5px 1px no-repeat,
    linear-gradient(#555, #555) center / 1px 5px no-repeat,
    #fff;
}
.alg .exp { border-color: #a9a79c; }
.dots { width: 6px; height: 1px; border-top: 1px dotted #9b998f; }
.check { width: 13px; height: 13px; border: 1px solid #c0bdae; border-radius: 1px; background: #fdfdfb; }
.check.x {
  background:
    linear-gradient(45deg, #0000 35%, #000 36% 64%, #0000 65%) center / 9px 9px no-repeat,
    linear-gradient(-45deg, #0000 35%, #000 36% 64%, #0000 65%) center / 9px 9px no-repeat,
    #fff;
}
.layer .check { margin-left: 3px; }
.lic { width: 20px; height: 20px; margin: 0 5px 0 6px; }
.order { height: 22px; padding: 5px 0 0; display: flex; align-items: center; gap: 4px; letter-spacing: -0.14px; }

.splitter { width: 6px; display: grid; place-items: center; }
.splitter.right { width: 7px; }
.vgrip { height: 202px; width: 4px; opacity: .7; }
.map { width: 602px; border: 1px solid #c2bfae; border-top-color: #aaa798; height: 625px; padding-top: 1px; }
.canvas { width: 600px; height: 622px; overflow: hidden; }
.river { fill: none; stroke: #bb22d4; stroke-width: 3; shape-rendering: crispEdges; }
.labels { font-size: 19px; letter-spacing: 0; }

.toolbox { width: 231px; }
.toolbox .dockhead { height: 21px; padding-left: 2px; }
.st { margin: 0 8px; }
.config {
  height: 36px;
  padding-top: 4px;
  border: 1px solid #aaa798;
  border-radius: 3px;
  background: linear-gradient(#f0eee2, #dedbcb);
  text-align: center;
  line-height: 13px;
}
.search { height: 20px; margin: 2px 0; border: 2px solid #c2bfae; border-radius: 3px; background: #fff; }
.algos { height: 545px; padding: 0 0 0 5px; border: 2px solid #c2bfae; border-bottom: 0; border-radius: 2px; background: #fff; }
.alg { height: 16px; display: flex; align-items: center; }
.alg span { padding-top: 1px; }
.alg svg { width: 16px; height: 16px; margin: 0 5px 0 3px; }
.alg.near svg { margin-right: 2px; }

.status { height: 27px; background: #ece9d8; display: flex; align-items: center; }
.msg { width: 437px; padding: 1px 0 0 5px; margin-right: 5px; letter-spacing: 0; }
.sb {
  height: 22px;
  border: 1px solid #8b897d;
  outline: 1px solid #d9d6c6;
  outline-offset: -2px;
  border-radius: 2px;
  display: flex;
  align-items: center;
  justify-content: center;
  gap: 4px;
  padding-top: 1px;
}
.sb svg { width: 17px; height: 17px; margin-top: -1px; }
.field { background: #fff; }
.s1 { width: 24px; margin-right: 2px; }
.s2 { width: 65px; margin-right: 3px; }
.s3 { width: 303px; margin-right: 2px; letter-spacing: 0; }
.s4 { width: 41px; margin-right: 2px; justify-content: flex-start; padding-left: 4px; }
.s5 { width: 83px; height: 22px; margin-right: 3px; }
.s6 { width: 23px; margin-right: 2px; }
.s7 { width: 63px; margin-right: 2px; }
.s8 { width: 64px; margin-right: 2px; }
.s9 { width: 24px; margin-right: 4px; }
.sizer { width: 14px; height: 14px; margin-top: 12px; }

.combo {
  height: 20px;
  border: 2px solid #bbb8a8;
  border-radius: 3px;
  background: #fff;
  display: flex;
  align-items: center;
  padding-left: 2px;
}
.combo span { flex: 1; padding-top: 2px; }
.combo i {
  width: 15px;
  height: 100%;
  border-left: 1px solid #bbb8a8;
  background: linear-gradient(#f2f0e4, #dfdccc);
  display: grid;
  place-items: center;
}
.combo i::after { content: ""; border: 4px solid transparent; border-top-color: #000; border-bottom: 0; }
.input { height: 20px; border: 2px solid #bbb8a8; border-radius: 3px; background: #fff; padding: 2px 0 0 2px; display: flex; align-items: center; }
.btn {
  height: 23px;
  padding-top: 1px;
  border: 1px solid #9a978a;
  border-radius: 3px;
  background: linear-gradient(#f4f2e6, #eceada 50%, #d9d6c6);
  display: flex;
  align-items: center;
  justify-content: center;
}
.more { width: 28px; height: 22px; border-color: #858277; letter-spacing: 0.3px; }

.dialog {
  position: absolute;
  left: 354px;
  top: 182px;
  width: 371px;
  height: 337px;
  padding: 0 4px 4px;
  border-radius: 7px 7px 0 0;
  background: #0540d8;
  box-shadow: inset -1px -1px #001b9c, inset 1px 0 #0a33c0;
}
.dlgbar {
  height: 30px;
  margin: 0 -4px;
  padding: 2px 6px 0 6px;
  border-radius: 7px 7px 0 0;
  display: flex;
  align-items: center;
  background: linear-gradient(#0a3cc8, #3a8cf8 2px, #0a5de8 5px, #0354e2 12px, #0462f8 20px, #0568fc 26px, #0346cc 30px);
}
.dcap {
  flex: 1;
  margin-left: 3px;
  padding-top: 2px;
  font: bold 12px "DejaVu Sans Condensed", "DejaVu Sans", sans-serif;
  letter-spacing: -0.08px;
  color: #fff;
  text-shadow: 1px 1px #0a2a80;
}
.dclose { width: 21px; height: 21px; border: 1px solid #fff; border-radius: 3px; background: linear-gradient(135deg, #f09078, #dc5030 50%, #c83c18); display: grid; place-items: center; }
.dclose svg { width: 11px; height: 11px; }
.dlgbody { height: 303px; padding: 11px 11px 0; background: #ece9d8; }
fieldset { margin: 0; padding: 3px 5px 0; border: 1px solid #b8b5a5; border-radius: 3px; min-width: 0; }
legend { padding: 1px 2px 0; height: 14px; }
.line { display: flex; align-items: center; }
.opt { display: flex; align-items: center; height: 14px; gap: 4px; }
.opt span { padding-top: 2px; }
.f1 { height: 65px; }
.f1 .opt { margin-top: 6px; }
.c1 { width: 297px; margin-right: 4px; }
.f2 { height: 43px; margin-top: 11px; }
.from { width: 29px; padding-top: 1px; margin-left: -1px; }
.c2 { width: 142px; }
.to { width: 18px; padding: 1px 0 0 3px; }
.c3 { width: 141px; }
.cache { margin-top: 10px; }
.cl { width: 68px; padding-top: 1px; }
.ci { width: 238px; margin-right: 7px; }
.f3 { height: 85px; margin-top: 11px; }
.oi { width: 299px; margin-right: 2px; }
.r1 { margin-top: 5px; }
.r2 { margin-top: 7px; }
.r1, .r2 { gap: 5px; }
.radio { width: 13px; height: 13px; border: 1px solid #b8b5a5; border-radius: 50%; background: #fff; }
.radio.sel { background: radial-gradient(circle, #000 3.500px, #fff 4.200px); }
.foot { margin-top: 11px; display: flex; align-items: center; }
.progress { width: 171px; height: 21px; margin-right: 10px; border: 1px solid #8b897d; border-radius: 3px; padding: 1px; display: grid; grid-template-columns: 18px 1fr 18px; align-items: center; }
.progress i { height: 17px; background: linear-gradient(90deg, #2a62c4, #3b76da 60%, #2e66c4); border-radius: 1px; }
.progress b { text-align: center; color: #807d74; font: bold 12px "Liberation Serif", serif; letter-spacing: 0.6px; }
.stop { width: 75px; margin-right: 10px; border-color: #b8b5a5; }
.hide { width: 75px; border-color: #6b695f; }
```
